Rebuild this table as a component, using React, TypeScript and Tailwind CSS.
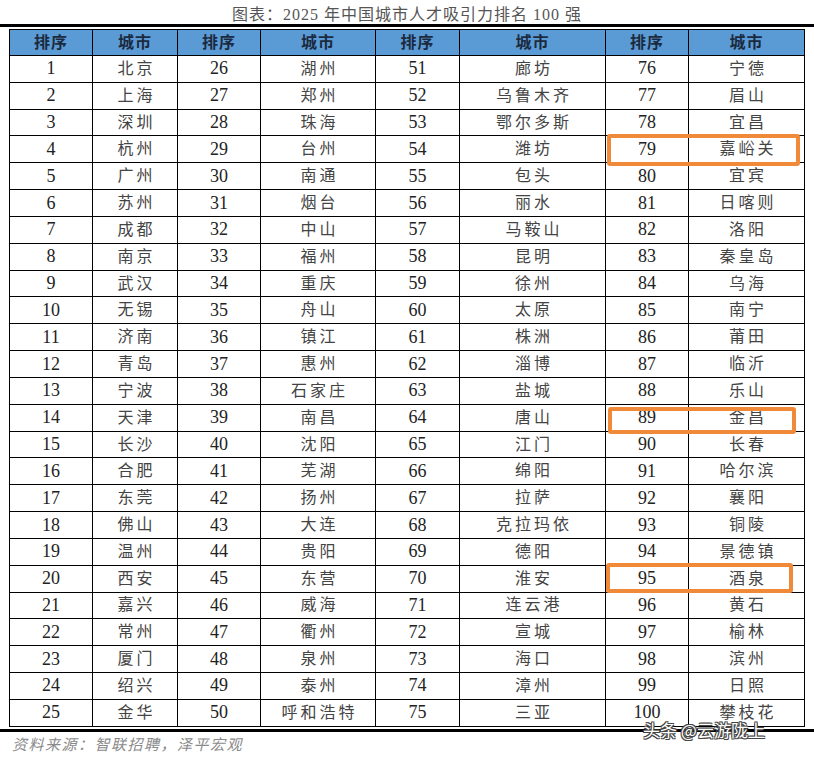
import React from "react";

const cols: string[][] = [
  ["北京","上海","深圳","杭州","广州","苏州","成都","南京","武汉","无锡","济南","青岛","宁波","天津","长沙","合肥","东莞","佛山","温州","西安","嘉兴","常州","厦门","绍兴","金华"],
  ["湖州","郑州","珠海","台州","南通","烟台","中山","福州","重庆","舟山","镇江","惠州","石家庄","南昌","沈阳","芜湖","扬州","大连","贵阳","东营","威海","衢州","泉州","泰州","呼和浩特"],
  ["廊坊","乌鲁木齐","鄂尔多斯","潍坊","包头","丽水","马鞍山","昆明","徐州","太原","株洲","淄博","盐城","唐山","江门","绵阳","拉萨","克拉玛依","德阳","淮安","连云港","宣城","海口","漳州","三亚"],
  ["宁德","眉山","宜昌","嘉峪关","宜宾","日喀则","洛阳","秦皇岛","乌海","南宁","莆田","临沂","乐山","金昌","长春","哈尔滨","襄阳","铜陵","景德镇","酒泉","黄石","榆林","滨州","日照","攀枝花"],
];

const font = "font-['Liberation_Serif','Noto_Sans_CJK_SC',serif]";

export default function App() {
  const rows = Array.from({ length: 25 }, (_, i) => i);
  return (
    <div className={`relative w-[814px] h-[760px] bg-white ${font}`}>
      <div className="h-[24px] pt-[6px] text-center text-[16px] leading-[18px] text-[#555] tracking-[1px]">
        图表：2025 年中国城市人才吸引力排名 100 强
      </div>
      <div className="h-[3px] bg-black" />
      <div className="h-[2px]" />
      <div className="ml-[9px] w-[796px] border-l border-t border-black grid grid-cols-[83px_85px_83px_115px_84px_146px_83px_116px] grid-rows-[26px_repeat(25,26.84px)]">
        {["排序","城市","排序","城市","排序","城市","排序","城市"].map((h, i) => (
          <div key={"h" + i} className="bg-[#5b9bd5] border-r border-b border-black flex items-center justify-center text-[16px] font-bold text-[#1b2a3f] tracking-[1px]">
            {h}
          </div>
        ))}
        {rows.map((r) => (
          <React.Fragment key={r}>
            {cols.map((c, ci) => (
              <React.Fragment key={ci}>
                <div className="border-r border-b border-black flex items-center justify-center text-[18px] text-[#222]">
                  {ci * 25 + r + 1}
                </div>
                <div className="border-r border-b border-black flex items-center justify-center text-[16px] text-[#444] tracking-[3px] pl-[3px]">
                  {c[r]}
                </div>
              </React.Fragment>
            ))}
          </React.Fragment>
        ))}
      </div>
      <div className="h-[2px]" />
      <div className="h-[3px] bg-black" />
      <div className="pl-[12px] pt-[4px] text-[15px] leading-[18px] italic text-[#8a8a8a] tracking-[1.5px]">
        资料来源：智联招聘，泽平宏观
      </div>

      <div className="absolute left-[607px] top-[134px] w-[193px] h-[32px] border-[4px] border-[#f08a38] rounded-[3px]" />
      <div className="absolute left-[608px] top-[407px] w-[188px] h-[27px] border-[4px] border-[#f08a38] rounded-[3px]" />
      <div className="absolute left-[606px] top-[563px] w-[187px] h-[30px] border-[4px] border-[#f08a38] rounded-[3px]" />

      <div className="absolute left-[643px] top-[719px] text-[17px] leading-[22px] text-white font-['Noto_Sans_CJK_SC',sans-serif] [text-shadow:1px_1px_0_#444,-1px_-1px_0_#444,1px_-1px_0_#444,-1px_1px_0_#444,0_1px_0_#444,0_-1px_0_#444]">
        头条 @云游陇上
      </div>
    </div>
  );
}
